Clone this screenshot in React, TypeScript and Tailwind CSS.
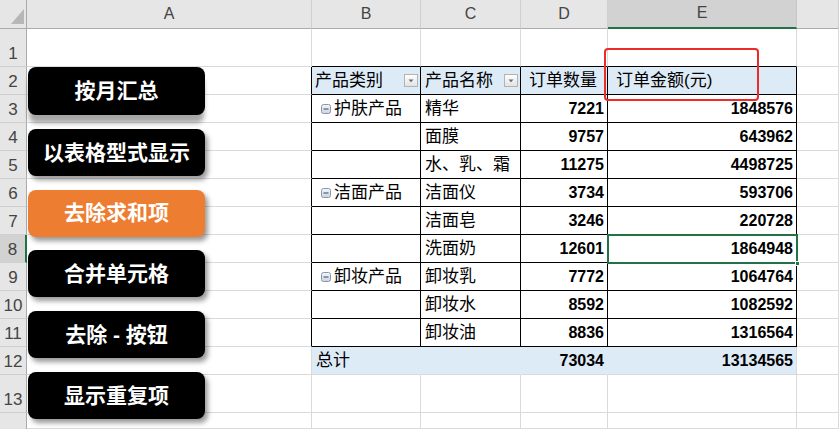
import React from 'react';

type Row = { b?: string; c?: string; d?: string; e?: string; group?: boolean };

const rows: Row[] = [
  { b: '护肤产品', group: true, c: '精华', d: '7221', e: '1848576' },
  { c: '面膜', d: '9757', e: '643962' },
  { c: '水、乳、霜', d: '11275', e: '4498725' },
  { b: '洁面产品', group: true, c: '洁面仪', d: '3734', e: '593706' },
  { c: '洁面皂', d: '3246', e: '220728' },
  { c: '洗面奶', d: '12601', e: '1864948' },
  { b: '卸妆产品', group: true, c: '卸妆乳', d: '7772', e: '1064764' },
  { c: '卸妆水', d: '8592', e: '1082592' },
  { c: '卸妆油', d: '8836', e: '1316564' },
];

const CollapseIcon = () => (
  <svg width="10" height="10" viewBox="0 0 10 10" className="shrink-0">
    <defs>
      <linearGradient id="cg" x1="0" y1="0" x2="0" y2="1">
        <stop offset="0" stopColor="#f4f7fb" />
        <stop offset="1" stopColor="#c9d3e2" />
      </linearGradient>
    </defs>
    <rect x="0.5" y="0.5" width="9" height="9" rx="2" fill="url(#cg)" stroke="#8a97ab" />
    <rect x="2.5" y="4.5" width="5" height="1" fill="#3b4658" />
  </svg>
);

const DropBtn = () => (
  <svg width="14" height="13" viewBox="0 0 14 13" className="shrink-0">
    <defs>
      <linearGradient id="dg" x1="0" y1="0" x2="0" y2="1">
        <stop offset="0" stopColor="#ffffff" />
        <stop offset="1" stopColor="#e2e2e2" />
      </linearGradient>
    </defs>
    <rect x="0.5" y="0.5" width="13" height="12" fill="url(#dg)" stroke="#b3b3b3" />
    <path d="M4.5 5.5 L9.5 5.5 L7 8.2 Z" fill="#6a6a6a" />
  </svg>
);

const colLetters = ['A', 'B', 'C', 'D', 'E', ''];

export default function App() {
  const cells: React.ReactNode[] = [];

  cells.push(
    <div key="corner" className="relative bg-[#e6e6e6] border-r border-b border-[#ababab]">
      <svg width="14" height="15" viewBox="0 0 14 15" className="absolute left-[11px] top-[9px]">
        <path d="M13 0 L13 15 L0 15 Z" fill="#b7b7b7" />
      </svg>
    </div>
  );
  colLetters.forEach((l, i) => {
    const selected = i === 4;
    cells.push(
      <div
        key={'h' + i}
        className={
          selected
            ? 'flex items-end justify-center pb-[2px] bg-[#d2d2d2] border-r border-r-[#c6c6c6] border-b-2 border-b-[#217346] text-[16px] text-[#444]'
            : 'flex items-end justify-center pb-[2px] bg-[#e6e6e6] border-r border-r-[#d0d0d0] border-b border-b-[#ababab] text-[16px] text-[#444]'
        }
      >
        {l}
      </div>
    );
  });

  const rowHeader = (n: number) => (
    <div
      key={'r' + n}
      className={
        n === 8
          ? 'flex items-end justify-center pb-[4px] bg-[#d2d2d2] border-r-2 border-r-[#217346] border-b border-b-[#cfcfcf] text-[17px] leading-none text-[#444]'
          : 'flex items-end justify-center pb-[4px] bg-[#e6e6e6] border-r border-r-[#ababab] border-b border-b-[#cfcfcf] text-[17px] leading-none text-[#444]'
      }
    >
      {n}
    </div>
  );

  const plain = 'border-r border-b border-[#dadada]';
  const boxed = 'border-r border-b border-black';

  cells.push(rowHeader(1));
  cells.push(<div key="1a" className={plain} />);
  for (let i = 0; i < 4; i++) cells.push(<div key={'1' + i} className="border-r border-r-[#dadada] border-b border-b-black" />);
  cells.push(<div key="1f" className={plain} />);

  cells.push(rowHeader(2));
  cells.push(<div key="2a" className="border-r border-r-black border-b border-b-[#dadada]" />);
  cells.push(
    <div key="2b" className={'flex items-center justify-between pl-[3px] pr-[2px] bg-[#ddebf7] text-[17px] ' + boxed}>
      <span>产品类别</span>
      <DropBtn />
    </div>
  );
  cells.push(
    <div key="2c" className={'flex items-center justify-between pl-[4px] pr-[2px] bg-[#ddebf7] text-[17px] ' + boxed}>
      <span>产品名称</span>
      <DropBtn />
    </div>
  );
  cells.push(
    <div key="2d" className={'flex items-center pl-[8px] bg-[#ddebf7] text-[17px] ' + boxed}>
      订单数量
    </div>
  );
  cells.push(
    <div key="2e" className={'flex items-center pl-[8px] bg-[#ddebf7] text-[17px] ' + boxed}>
      订单金额(元)
    </div>
  );
  cells.push(<div key="2f" className={plain} />);

  rows.forEach((r, idx) => {
    const n = idx + 3;
    cells.push(rowHeader(n));
    cells.push(<div key={n + 'a'} className="border-r border-r-black border-b border-b-[#dadada]" />);
    cells.push(
      <div key={n + 'b'} className={'flex items-center gap-[3px] pl-[9px] text-[17px] ' + boxed}>
        {r.group ? (
          <>
            <CollapseIcon />
            <span>{r.b}</span>
          </>
        ) : null}
      </div>
    );
    cells.push(
      <div key={n + 'c'} className={'flex items-center pl-[4px] text-[17px] ' + boxed}>
        {r.c}
      </div>
    );
    cells.push(
      <div key={n + 'd'} className={'flex items-center justify-end pr-[3px] font-bold ' + boxed}>
        {r.d}
      </div>
    );
    cells.push(
      <div key={n + 'e'} className={'flex items-center justify-end pr-[3px] font-bold ' + boxed}>
        {r.e}
      </div>
    );
    cells.push(<div key={n + 'f'} className={plain} />);
  });

  cells.push(rowHeader(12));
  cells.push(<div key="12a" className={plain} />);
  cells.push(
    <div key="12b" className="flex items-center pl-[4px] text-[17px] bg-[#ddebf7] border-r border-r-[#ddebf7] border-b border-b-[#dadada]">
      总计
    </div>
  );
  cells.push(<div key="12c" className="bg-[#ddebf7] border-r border-r-[#ddebf7] border-b border-b-[#dadada]" />);
  cells.push(
    <div key="12d" className="flex items-center justify-end pr-[3px] font-bold bg-[#ddebf7] border-r border-r-[#ddebf7] border-b border-b-[#dadada]">
      73034
    </div>
  );
  cells.push(
    <div key="12e" className="flex items-center justify-end pr-[3px] font-bold bg-[#ddebf7] border-r border-r-[#dadada] border-b border-b-[#dadada]">
      13134565
    </div>
  );
  cells.push(<div key="12f" className={plain} />);

  [13, 14].forEach((n) => {
    cells.push(n === 14 ? <div key="r14" className="bg-[#e6e6e6] border-r border-r-[#ababab]" /> : rowHeader(n));
    for (let i = 0; i < 6; i++) cells.push(<div key={n + '_' + i} className={plain} />);
  });

  const buttons = [
    { t: '按月汇总', orange: false, first: true },
    { t: '以表格型式显示', orange: false },
    { t: '去除求和项', orange: true },
    { t: '合并单元格', orange: false },
    { t: '去除 - 按钮', orange: false },
    { t: '显示重复项', orange: false },
  ];

  return (
    <div className="relative w-[839px] h-[429px] overflow-hidden bg-white text-[16px] text-black font-['Liberation_Sans','Noto_Sans_CJK_SC',sans-serif]">
      <div className="grid h-full grid-cols-[27px_285px_109px_100px_87px_189px_1fr] grid-rows-[29px_38px_repeat(11,28px)_38px_1fr]">
        {cells}
      </div>

      <div className="absolute left-[28px] top-[67px] flex flex-col gap-[13.8px]">
        {buttons.map((b) => (
          <div
            key={b.t}
            className={
              b.orange
                ? 'flex h-[47px] w-[177px] items-center justify-center rounded-[8px] bg-[#ed7d31] text-[21px] font-bold text-white shadow-[3px_4px_5px_rgba(0,0,0,0.4)]'
                : b.first
                ? 'flex h-[48px] w-[177px] items-center justify-center rounded-[8px] bg-black text-[21px] font-bold text-white shadow-[0_9px_5px_-1px_rgba(0,0,0,0.35)]'
                : 'flex h-[47px] w-[177px] items-center justify-center rounded-[8px] bg-black text-[21px] font-bold text-white shadow-[3px_4px_5px_rgba(0,0,0,0.4)]'
            }
          >
            {b.t}
          </div>
        ))}
      </div>

      <div className="absolute left-[604px] top-[48px] h-[53px] w-[155px] rounded-[4px] border-2 border-[#ee2a2a]" />

      <div className="absolute left-[607px] top-[234px] h-[30px] w-[191px] border-2 border-[#217346]" />
      <div className="absolute left-[795px] top-[261px] h-[5px] w-[5px] bg-[#217346] border border-white" />
    </div>
  );
}
